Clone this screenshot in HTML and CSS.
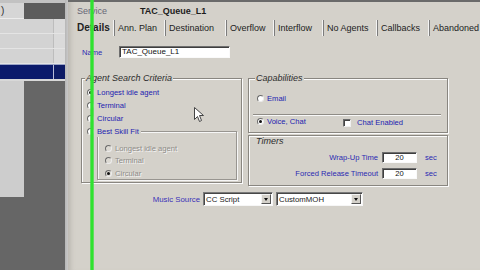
FILE: index.html
```html
<!DOCTYPE html>
<html>
<head>
<meta charset="utf-8">
<link rel="stylesheet" href="styles.css">
</head>
<body>
<div class="screen">
  <aside class="side">
    <div class="side-top"></div>
    <div class="side-head"><span class="side-head-l">)</span><span class="side-head-r"></span></div>
    <div class="side-row"><span class="c1"></span><span class="c2"></span></div>
    <div class="side-row"><span class="c1"></span><span class="c2"></span></div>
    <div class="side-row"><span class="c1"></span><span class="c2"></span></div>
    <div class="side-row sel"><span class="c1"></span><span class="c2"></span></div>
    <div class="side-gap"></div>
    <div class="side-rest"><span class="rest-l"></span></div>
  </aside>
  <div class="edge"></div>
  <main class="main">
    <div class="topbar"></div>
    <div class="header"><span class="svc">Service</span><span class="title">TAC_Queue_L1</span></div>
    <nav class="tabs">
      <span class="tab active w-details">Details</span>
      <span class="tab w-ann">Ann. Plan</span>
      <span class="tab w-dest">Destination</span>
      <span class="tab w-over">Overflow</span>
      <span class="tab w-inter">Interflow</span>
      <span class="tab w-noag">No Agents</span>
      <span class="tab w-cb">Callbacks</span>
      <span class="tab w-ab">Abandoned</span>
    </nav>
    <div class="content">
      <div class="name-row">
        <span class="blue-lbl name-lbl">Name</span>
        <span class="input name-input">TAC_Queue_L1</span>
      </div>
      <div class="groups">
        <div class="group agent">
          <div class="legend">Agent Search Criteria</div>
          <div class="opts">
            <div class="opt"><span class="radio on"></span><span class="lbl">Longest idle agent</span></div>
            <div class="opt"><span class="radio"></span><span class="lbl">Terminal</span></div>
            <div class="opt"><span class="radio"></span><span class="lbl">Circular</span></div>
          </div>
          <div class="subgroup">
            <div class="sublegend"><span class="radio"></span><span class="lbl">Best Skill Fit</span></div>
            <div class="subopts">
              <div class="opt dis"><span class="radio"></span><span class="lbl">Longest idle agent</span></div>
              <div class="opt dis"><span class="radio"></span><span class="lbl">Terminal</span></div>
              <div class="opt dis"><span class="radio on"></span><span class="lbl">Circular</span></div>
            </div>
          </div>
        </div>
        <div class="right-col">
          <div class="group caps">
            <div class="legend">Capabilities</div>
            <div class="opt email"><span class="radio"></span><span class="lbl">Email</span></div>
            <div class="sep"></div>
            <div class="voice-row">
              <div class="opt voice"><span class="radio on"></span><span class="lbl">Voice, Chat</span></div>
              <div class="check-wrap"><span class="check"></span><span class="lbl">Chat Enabled</span></div>
            </div>
          </div>
          <div class="group timers">
            <div class="timers-title">Timers</div>
            <div class="timer-grid">
              <span class="blue-lbl t-lbl">Wrap-Up Time</span>
              <span class="input t-input">20</span>
              <span class="blue-lbl t-unit">sec</span>
              <span class="blue-lbl t-lbl">Forced Release Timeout</span>
              <span class="input t-input">20</span>
              <span class="blue-lbl t-unit">sec</span>
            </div>
          </div>
        </div>
      </div>
      <div class="music-row">
        <span class="blue-lbl music-lbl">Music Source</span>
        <span class="select sel1"><span class="sel-text">CC Script</span><span class="sel-btn"><span class="arrow"></span></span></span>
        <span class="select sel2"><span class="sel-text">CustomMOH</span><span class="sel-btn"><span class="arrow"></span></span></span>
      </div>
    </div>
  </main>
  <div class="green"></div>
  <svg class="cursor" width="11" height="16" viewBox="0 0 11 16"><path d="M0.5 0.5 L0.5 12.5 L3.5 9.5 L5.5 14.5 L7.5 13.5 L5.5 8.5 L9.5 8.5 Z" fill="#fff" stroke="#444" stroke-width="1"/></svg>
</div>
</body>
</html>
```
FILE: styles.css
```css
* { box-sizing: border-box; }
html, body { margin: 0; padding: 0; }
body {
  width: 480px; height: 270px; overflow: hidden;
  background: #d4d1ca;
  font-family: "Liberation Sans", Arial, sans-serif;
}
.screen { position: relative; display: flex; width: 480px; height: 270px; overflow: hidden; }

/* left list panel */
.side { width: 65px; flex: none; display: flex; flex-direction: column; background: #666; }
.side-top { height: 3px; background: #c2c2c2; }
.side-head { height: 16px; display: flex; }
.side-head-l { width: 24px; background: #d6d6d6; font-size: 10px; line-height: 15px; color: #333; padding-left: 1px; border-bottom: 1px solid #ececec; }
.side-head-r { flex: 1; background: #5c5c5c; }
.side-row { height: 15px; display: flex; background: #d3d3d3; border-bottom: 1px solid #e4e4e4; }
.side-row .c1 { width: 54px; border-right: 1px solid #bdbdbd; }
.side-row .c2 { flex: 1; background: #dadada; }
.side-row.sel { background: #0b1a6b; border-top: 1px solid #9aa3c6; border-bottom: none; }
.side-row.sel .c1 { border-right: 1px solid #b8bcd8; }
.side-row.sel .c2 { background: #0d1b66; }
.side-gap { height: 2px; background: #d8d8d8; }
.side-rest { flex: 1; display: flex; flex-direction: column; }
.rest-l { width: 24px; height: 116px; background: #cdcdcd; }

.edge { width: 3px; flex: none; background: linear-gradient(to right, #b6b6b6, #c8c8c8); }

/* main form */
.main { flex: 1; display: flex; flex-direction: column; background: #d4d1ca; box-shadow: inset 6px 0 4px -3px #bdbab3; }
.topbar { height: 2px; background: #6a6a6a; }
.header { height: 17px; display: flex; align-items: center; padding-left: 9px; font-size: 9px; }
.svc { width: 63px; color: #676775; }
.title { font-weight: bold; color: #1c1c1c; }

.tabs { height: 18px; display: flex; padding-left: 5px; }
.tab {
  flex: none; font-size: 9px; color: #222; line-height: 16px; margin: 1px 0;
  padding-left: 4px; white-space: nowrap; overflow: hidden;
  border-left: 1px solid #f4f4f4; box-shadow: inset 1px 0 #7c7c7c;
}
.tab.active { border-left: none; box-shadow: none; font-weight: bold; font-size: 10px; padding-left: 4px; }
.w-details { width: 40px; }
.w-ann { width: 51px; }
.w-dest { width: 61px; }
.w-over { width: 48px; }
.w-inter { width: 49px; }
.w-noag { width: 54px; }
.w-cb { width: 52px; }
.w-ab { width: 60px; }

.content { padding-left: 13px; }
.blue-lbl { color: #2a2ab2; font-size: 7.6px; }
.input {
  background: #fff; font-size: 8px; color: #111;
  border: 1px solid; border-color: #6e6e6e #fafafa #fafafa #6e6e6e;
  box-shadow: inset 1px 1px #3e3e3e;
}
.name-row { margin-top: 9px; height: 12px; display: flex; align-items: center; }
.name-lbl { width: 38px; padding-left: 1px; }
.name-input { width: 111px; height: 12px; line-height: 10px; padding-left: 2px; }

.groups { margin-top: 20px; display: flex; gap: 6px; align-items: flex-start; }
.group {
  border: 1px solid #898680;
  box-shadow: inset 1px 1px #fbfbfb, 1px 1px #fbfbfb;
}
.legend {
  width: fit-content; margin: -6px 0 0 3px; padding: 0 1px;
  background: #d4d1ca; font-size: 9px; line-height: 11px; font-style: italic; color: #2c2c2c;
}
.agent { width: 161px; height: 105px; }
.opts { padding: 2px 0 0 5px; }
.opt { display: flex; align-items: center; height: 13px; }
.lbl { font-size: 7.6px; color: #2222b0; margin-left: 3px; white-space: nowrap; }
.radio {
  flex: none; width: 7px; height: 7px; border-radius: 50%;
  background: #fff; border: 1px solid; border-color: #6a6a6a #ececec #ececec #6a6a6a;
  display: inline-flex; align-items: center; justify-content: center;
}
.radio.on::after { content: ""; width: 3px; height: 3px; border-radius: 50%; background: #111; }

.subgroup {
  margin: 6px 0 0 15px; width: 140px; height: 49px;
  border: 1px solid #989590; box-shadow: inset 1px 1px #f6f6f6, 1px 1px #f6f6f6;
}
.sublegend {
  display: flex; align-items: center; width: fit-content; height: 11px;
  margin: -6px 0 0 -11px; padding-right: 2px; background: #d4d1ca;
}
.sublegend .lbl { margin-left: 3px; }
.subopts { padding: 5px 0 0 7px; }
.subopts .opt { height: 12.5px; }
.opt.dis .lbl { color: #8e8c88; text-shadow: 1px 1px 0 #f4f4f4; }
.opt.dis .radio { background: #dcd9d2; }

.right-col { width: 200px; display: flex; flex-direction: column; }
.caps { height: 55px; }
.caps .legend { margin-left: 6px; }
.caps .email { margin: 8px 0 0 8px; height: 13px; }
.sep { margin: 9px 6px 0 4px; height: 2px; border-top: 1px solid #8f8c86; border-bottom: 1px solid #f8f8f8; }
.voice-row { display: flex; align-items: flex-start; height: 12px; }
.voice { margin-left: 8px; height: 10px; width: 86px; }
.check-wrap { display: flex; align-items: center; margin-top: 2px; height: 9px; }
.check {
  width: 8px; height: 8px; background: #fff; flex: none;
  border: 1px solid; border-color: #6a6a6a #f0f0f0 #f0f0f0 #6a6a6a;
  box-shadow: inset 1px 1px #444;
}
.check-wrap .lbl { margin-left: 6px; }

.timers { margin-top: 2px; height: 51px; }
.timers-title { font-size: 9px; font-style: italic; color: #2c2c2c; line-height: 11px; padding-left: 7px; }
.timer-grid {
  padding-top: 2px;
  display: grid; grid-template-columns: 129px 35px auto; grid-auto-rows: 16.5px;
  column-gap: 4px; align-items: center;
}
.t-lbl { text-align: right; white-space: nowrap; }
.t-input { height: 11px; line-height: 9px; text-align: center; font-size: 7.6px; }
.t-unit { padding-left: 4px; }

.music-row { margin-top: 6px; height: 14px; display: flex; align-items: center; gap: 3px; }
.music-lbl { width: 119px; text-align: right; font-size: 7.8px; color: #3b32b8; }
.select {
  height: 14px; display: flex; align-items: center; justify-content: space-between;
  background: #fff; border: 1px solid; border-color: #7a7a7a #f6f6f6 #f6f6f6 #7a7a7a;
  box-shadow: inset 1px 1px #474747; padding: 0 1px 0 2px;
}
.sel1 { width: 70px; }
.sel2 { width: 87px; }
.sel-text { font-size: 7.8px; color: #222; white-space: nowrap; }
.sel-btn {
  width: 10px; height: 10px; background: #d4d1ca; display: flex; align-items: center; justify-content: center;
  border: 1px solid; border-color: #f4f4f4 #555 #555 #f4f4f4;
}
.arrow { width: 0; height: 0; border-left: 2.5px solid transparent; border-right: 2.5px solid transparent; border-top: 3px solid #111; }

/* overlays: video artefact line and mouse pointer */
.green {
  position: absolute; left: 90px; top: 0; width: 4px; height: 270px;
  background: linear-gradient(to right, rgba(70,220,70,.55), #2fe22f 30%, #2fe22f 70%, rgba(70,220,70,.55));
}
.cursor { position: absolute; left: 194px; top: 107px; }
```
